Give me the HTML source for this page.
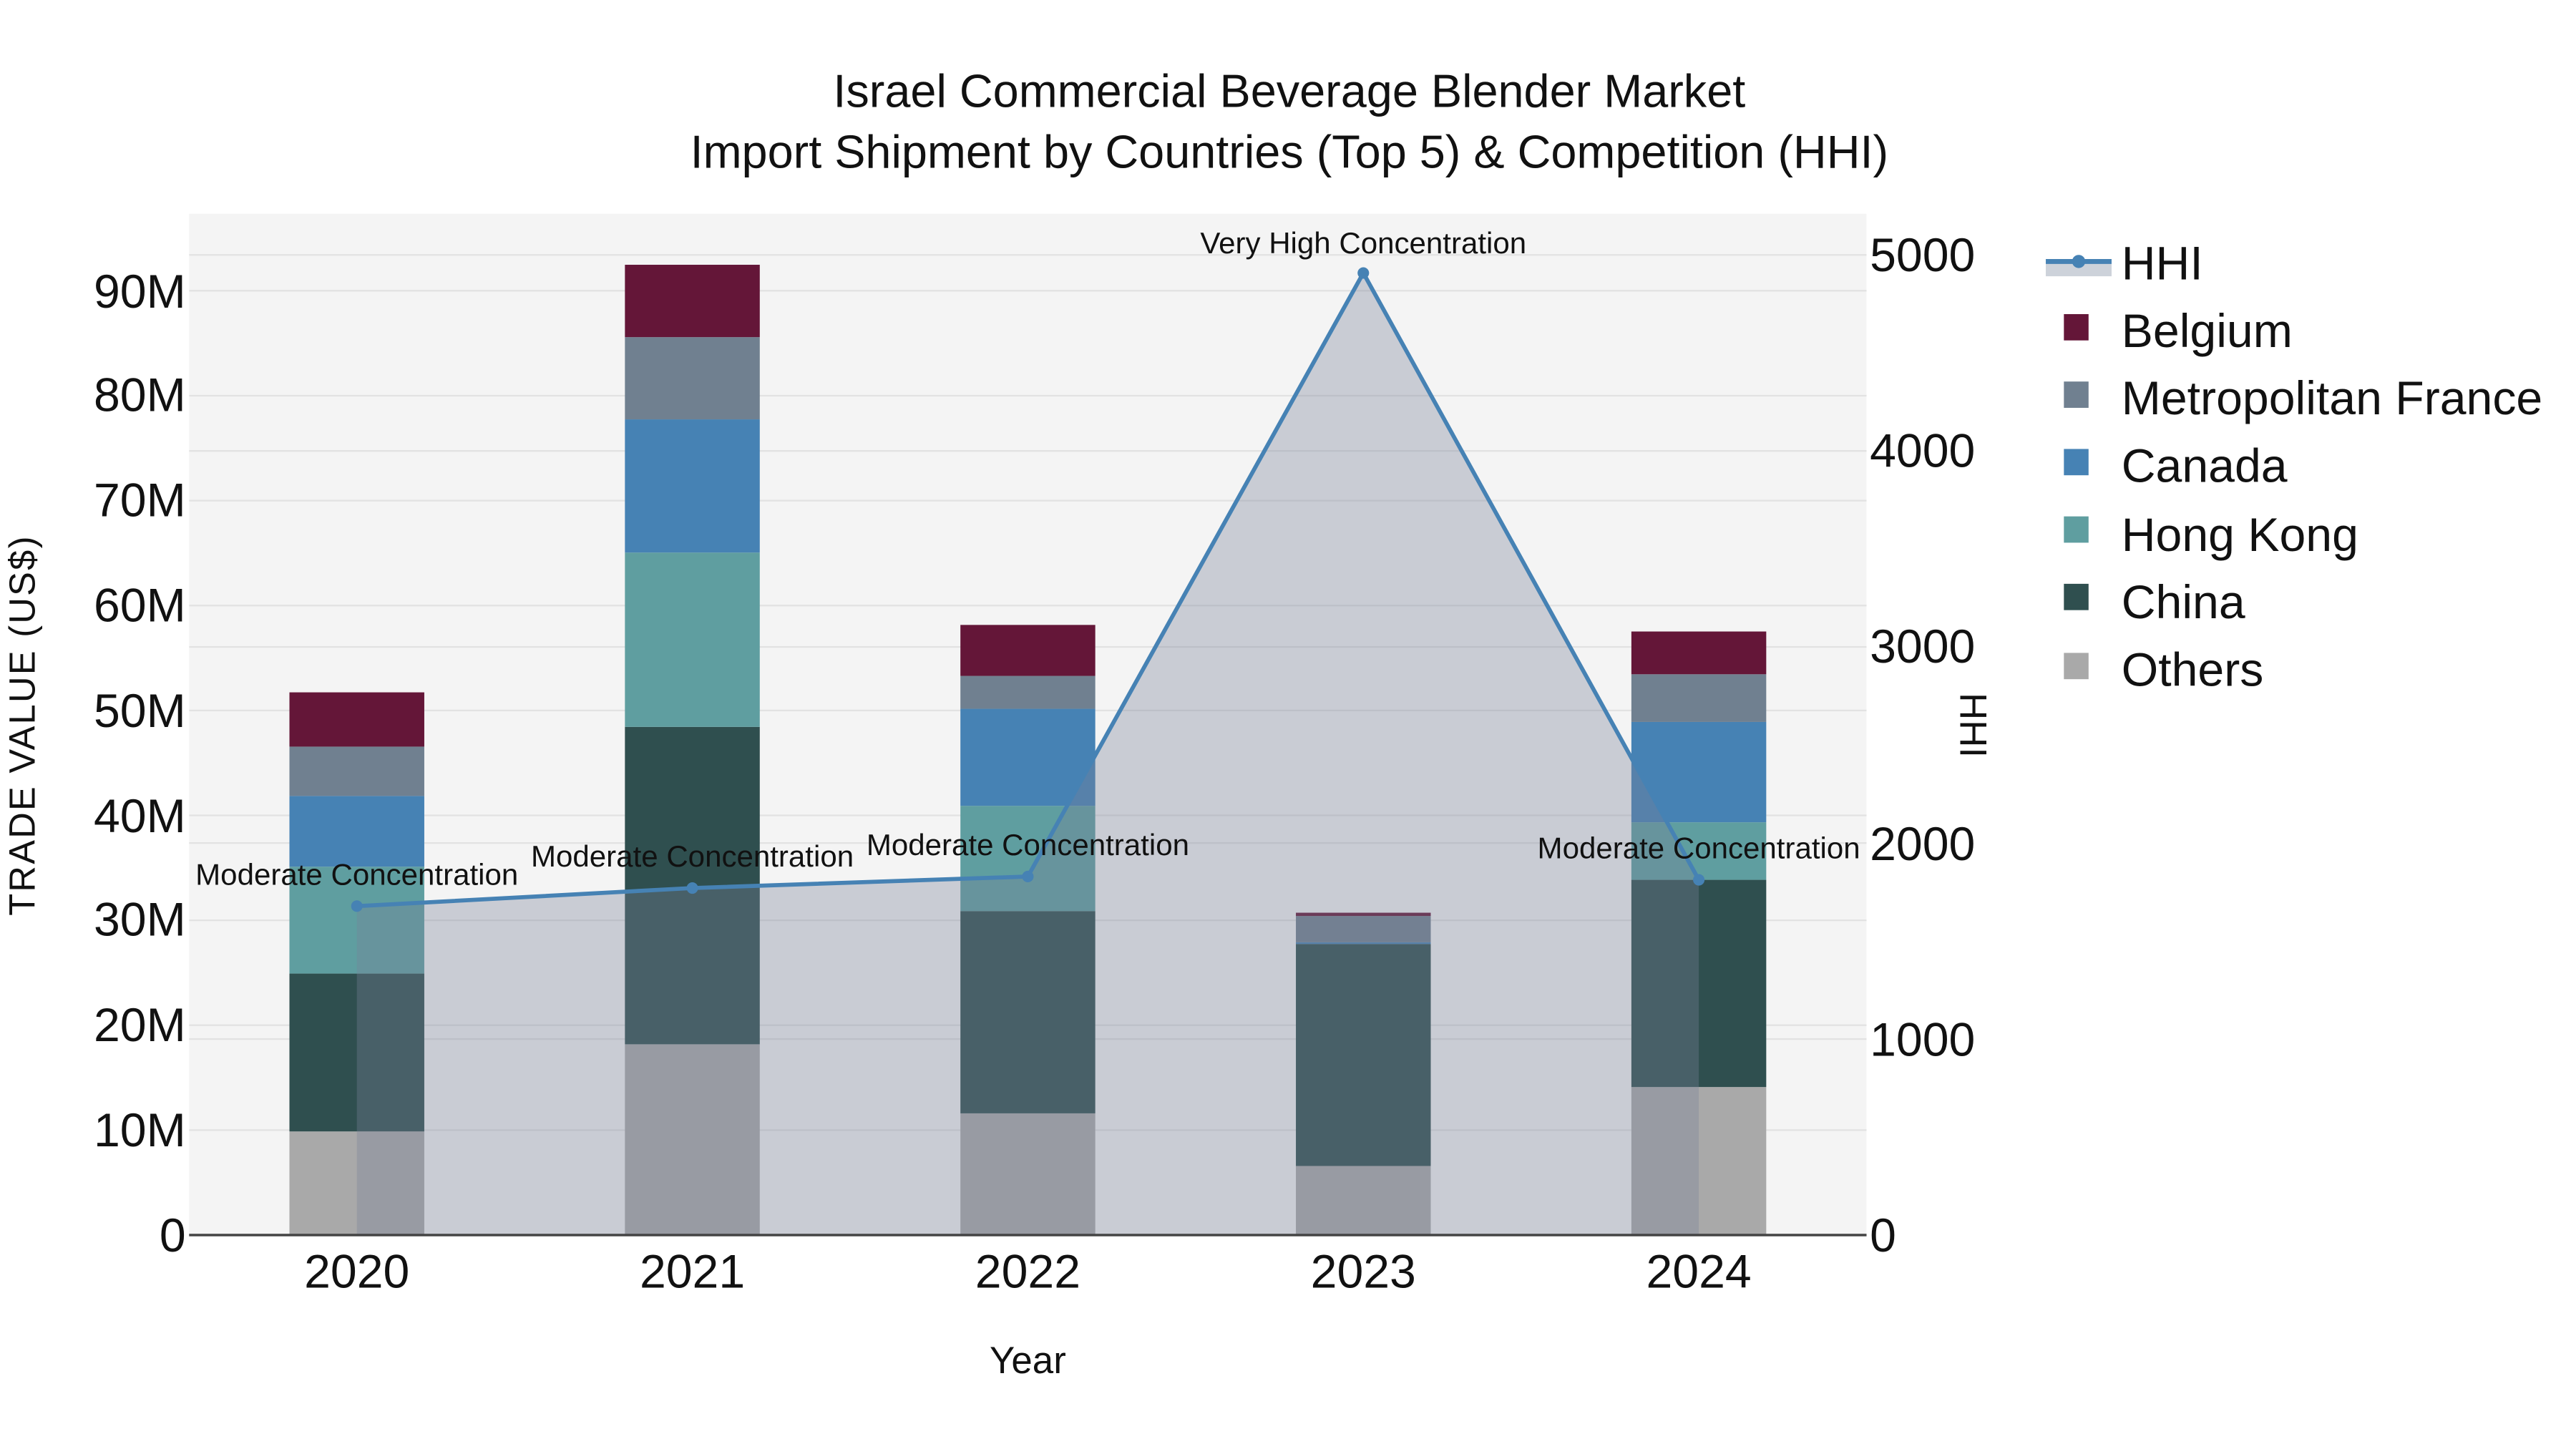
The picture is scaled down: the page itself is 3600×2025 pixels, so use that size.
<!DOCTYPE html>
<html><head><meta charset="utf-8"><style>
html,body{margin:0;padding:0;background:#fff;}
svg{display:block;}
text{font-family:"Liberation Sans",sans-serif;fill:#111;}
</style></head><body>
<svg width="3600" height="2025" viewBox="0 0 1566.4 881.1" xmlns="http://www.w3.org/2000/svg">
<rect x="0" y="0" width="1567" height="882" fill="#fff"/>
<rect x="115" y="130" width="1020" height="621" fill="#f4f4f4"/>
<g stroke="#e2e2e2" stroke-width="1">
<line x1="115" x2="1135" y1="687.2" y2="687.2"/><line x1="115" x2="1135" y1="623.4" y2="623.4"/>
<line x1="115" x2="1135" y1="559.6" y2="559.6"/><line x1="115" x2="1135" y1="495.8" y2="495.8"/>
<line x1="115" x2="1135" y1="432" y2="432"/><line x1="115" x2="1135" y1="368.2" y2="368.2"/>
<line x1="115" x2="1135" y1="304.4" y2="304.4"/><line x1="115" x2="1135" y1="240.6" y2="240.6"/>
<line x1="115" x2="1135" y1="176.8" y2="176.8"/>
<line x1="115" x2="1135" y1="631.8" y2="631.8"/><line x1="115" x2="1135" y1="512.6" y2="512.6"/>
<line x1="115" x2="1135" y1="393.4" y2="393.4"/><line x1="115" x2="1135" y1="274.2" y2="274.2"/>
<line x1="115" x2="1135" y1="155" y2="155"/>
</g>
<g>
<rect x="176" y="688" width="82" height="63" fill="#a9a9a9"/>
<rect x="176" y="592" width="82" height="96" fill="#2f4f4f"/>
<rect x="176" y="527" width="82" height="65" fill="#5f9ea0"/>
<rect x="176" y="484" width="82" height="43" fill="#4682b4"/>
<rect x="176" y="454" width="82" height="30" fill="#708090"/>
<rect x="176" y="421" width="82" height="33" fill="#641638"/>

<rect x="380" y="635" width="82" height="116" fill="#a9a9a9"/>
<rect x="380" y="442" width="82" height="193" fill="#2f4f4f"/>
<rect x="380" y="336" width="82" height="106" fill="#5f9ea0"/>
<rect x="380" y="255" width="82" height="81" fill="#4682b4"/>
<rect x="380" y="205" width="82" height="50" fill="#708090"/>
<rect x="380" y="161" width="82" height="44" fill="#641638"/>

<rect x="584" y="677" width="82" height="74" fill="#a9a9a9"/>
<rect x="584" y="554" width="82" height="123" fill="#2f4f4f"/>
<rect x="584" y="490" width="82" height="64" fill="#5f9ea0"/>
<rect x="584" y="431" width="82" height="59" fill="#4682b4"/>
<rect x="584" y="411" width="82" height="20" fill="#708090"/>
<rect x="584" y="380" width="82" height="31" fill="#641638"/>

<rect x="788" y="709" width="82" height="42" fill="#a9a9a9"/>
<rect x="788" y="574" width="82" height="135" fill="#2f4f4f"/>
<rect x="788" y="573" width="82" height="1" fill="#4682b4"/>
<rect x="788" y="557" width="82" height="16" fill="#708090"/>
<rect x="788" y="555" width="82" height="2" fill="#641638"/>

<rect x="992" y="661" width="82" height="90" fill="#a9a9a9"/>
<rect x="992" y="535" width="82" height="126" fill="#2f4f4f"/>
<rect x="992" y="500" width="82" height="35" fill="#5f9ea0"/>
<rect x="992" y="439" width="82" height="61" fill="#4682b4"/>
<rect x="992" y="410" width="82" height="29" fill="#708090"/>
<rect x="992" y="384" width="82" height="26" fill="#641638"/>
</g>
<polygon points="217,751 217,551 421,540 625,533 829,166 1033,535 1033,751" fill="rgb(120,130,152)" fill-opacity="0.35"/>
<polyline points="217,551 421,540 625,533 829,166 1033,535" fill="none" stroke="#4682b4" stroke-width="2.5"/>
<g fill="#4682b4"><circle cx="217" cy="551" r="3.5"/><circle cx="421" cy="540" r="3.5"/><circle cx="625" cy="533" r="3.5"/><circle cx="829" cy="166" r="3.5"/><circle cx="1033" cy="535" r="3.5"/></g>
<line x1="115" x2="1135" y1="751" y2="751" stroke="#444" stroke-width="1.5"/>
<g font-size="18.3" text-anchor="middle">
<text x="217" y="538">Moderate Concentration</text>
<text x="421" y="527">Moderate Concentration</text>
<text x="625" y="520">Moderate Concentration</text>
<text x="829" y="154">Very High Concentration</text>
<text x="1033" y="522">Moderate Concentration</text>
</g>
<g font-size="28.8" text-anchor="end">
<text x="113" y="761">0</text><text x="113" y="697">10M</text><text x="113" y="633">20M</text>
<text x="113" y="569">30M</text><text x="113" y="506">40M</text><text x="113" y="442">50M</text>
<text x="113" y="378">60M</text><text x="113" y="314">70M</text><text x="113" y="250">80M</text>
<text x="113" y="187">90M</text>
</g>
<g font-size="28.8" text-anchor="start">
<text x="1137" y="761">0</text><text x="1137" y="642">1000</text><text x="1137" y="523">2000</text>
<text x="1137" y="403">3000</text><text x="1137" y="284">4000</text><text x="1137" y="165">5000</text>
</g>
<g font-size="28.8" text-anchor="middle">
<text x="217" y="783">2020</text><text x="421" y="783">2021</text><text x="625" y="783">2022</text>
<text x="829" y="783">2023</text><text x="1033" y="783">2024</text>
</g>
<text x="625" y="835" font-size="23" text-anchor="middle">Year</text>
<text transform="translate(21,441) rotate(-90)" font-size="22" text-anchor="middle" letter-spacing="1">TRADE VALUE (US$)</text>
<text transform="translate(1192,441) rotate(90)" font-size="23" text-anchor="middle">HHI</text>
<g font-size="28.2" text-anchor="middle">
<text x="784" y="65">Israel Commercial Beverage Blender Market</text>
<text x="784" y="102">Import Shipment by Countries (Top 5) &amp; Competition (HHI)</text>
</g>
<rect x="1244" y="159" width="40" height="9" fill="#cdd2da"/>
<line x1="1244" x2="1284" y1="159" y2="159" stroke="#4682b4" stroke-width="3"/>
<circle cx="1264" cy="159" r="4" fill="#4682b4"/>
<rect x="1255" y="191" width="15" height="16" fill="#641638"/>
<rect x="1255" y="232" width="15" height="16" fill="#708090"/>
<rect x="1255" y="273" width="15" height="16" fill="#4682b4"/>
<rect x="1255" y="314" width="15" height="16" fill="#5f9ea0"/>
<rect x="1255" y="355" width="15" height="16" fill="#2f4f4f"/>
<rect x="1255" y="397" width="15" height="16" fill="#a9a9a9"/>
<g font-size="28.8">
<text x="1290" y="170">HHI</text><text x="1290" y="211">Belgium</text>
<text x="1290" y="252">Metropolitan France</text><text x="1290" y="293">Canada</text>
<text x="1290" y="335">Hong Kong</text><text x="1290" y="376">China</text>
<text x="1290" y="417">Others</text>
</g>
</svg>
</body></html>
